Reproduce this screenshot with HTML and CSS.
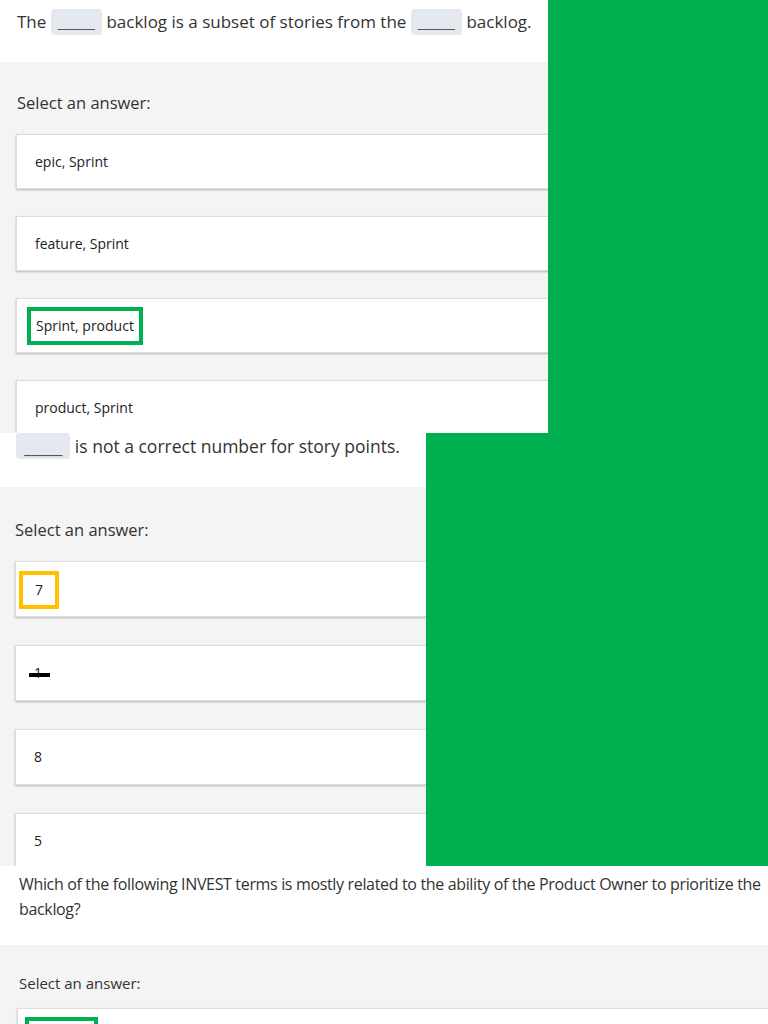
FILE: index.html
```html
<!DOCTYPE html>
<html lang="en">

<head>
    <meta charset="UTF-8">
    <meta name="viewport" content="width=device-width, initial-scale=1.0">
    <title>Story Quiz</title>

    <link rel="stylesheet" href="styles.css">
</head>

<body>

    <!-- Question 1 -->
    <section class="shot shot-one">
        <div class="quiz">
            <div class="question">
                The <span class="blank">_____</span> backlog is a subset of stories from the
                <span class="blank">_____</span> backlog.
            </div>
            <div class="answers">
                <p class="prompt">Select an answer:</p>
                <div class="card"><span class="label">epic, Sprint</span></div>
                <div class="card"><span class="label">feature, Sprint</span></div>
                <div class="card"><span class="label mark-green">Sprint, product</span></div>
                <div class="card"><span class="label">product, Sprint</span></div>
            </div>
        </div>
        <div class="fill"></div>
    </section>

    <!-- Question 2 -->
    <section class="shot shot-two">
        <div class="quiz">
            <div class="question">
                <span class="blank">_____</span> is not a correct number for story points.
            </div>
            <div class="answers">
                <p class="prompt">Select an answer:</p>
                <div class="card"><span class="label mark-yellow">7</span></div>
                <div class="card"><span class="label struck">1</span></div>
                <div class="card"><span class="label">8</span></div>
                <div class="card"><span class="label">5</span></div>
            </div>
        </div>
        <div class="fill"></div>
    </section>

    <!-- Question 3 -->
    <section class="shot shot-three">
        <div class="quiz">
            <div class="question">
                Which of the following INVEST terms is mostly related to the ability of the Product Owner to prioritize the backlog?
            </div>
            <div class="answers">
                <p class="prompt">Select an answer:</p>
                <div class="card"><span class="label mark-green">&nbsp;</span></div>
            </div>
        </div>
    </section>

</body>

</html>
```

FILE: styles.css
```css
body {
    margin: 0;
    font-family: "Open Sans", "Noto Sans", sans-serif;
    color: #333;
    background: #fff;
}

p {
    margin: 0;
}

/* each screenshot strip */
.shot {
    display: flex;
    overflow: hidden;
}

.quiz {
    overflow: hidden;
}

.fill {
    flex: 1;
    background-color: #00b050;
}

.question {
    background-color: #fff;
}

.blank {
    display: inline-block;
    background-color: #e4e9ef;
    border-radius: 4px;
    padding: 0 7px;
    line-height: 26px;
    color: #555;
}

.answers {
    background-color: #f4f4f4;
    display: flex;
    flex-direction: column;
}

.prompt {
    line-height: 24px;
}

.card {
    display: flex;
    align-items: center;
    background-color: #fff;
    border: 1px solid #dcdcdc;
    box-shadow: 0 1px 2px rgba(0, 0, 0, 0.25);
    margin-right: -20px;
    font-size: 14px;
    color: #222;
}

.label {
    line-height: 24px;
}

/* answer marks */
.mark-green {
    border: 4px solid #00b050;
    padding: 3px 5px;
}

.mark-yellow {
    border: 4px solid #ffc000;
    padding: 3px 0;
    width: 32px;
    text-align: center;
}

.struck {
    position: relative;
}

.struck::after {
    content: "";
    position: absolute;
    left: -5px;
    top: 12px;
    width: 21px;
    height: 4px;
    background-color: #000;
}

/* first strip */
.shot-one {
    height: 433px;
}

.shot-one .quiz {
    width: 548px;
}

.shot-one .question {
    height: 62px;
    box-sizing: border-box;
    padding: 8px 0 0 17px;
    font-size: 17px;
    line-height: 28px;
    white-space: nowrap;
}

.shot-one .answers {
    padding: 29px 0 0 16px;
    height: 371px;
}

.shot-one .prompt {
    font-size: 16.5px;
    margin-left: 1px;
    margin-bottom: 19px;
}

.shot-one .card {
    height: 55px;
    box-sizing: border-box;
    padding-left: 18px;
    margin-bottom: 27px;
}

.shot-one .mark-green {
    margin-left: -8px;
}

/* second strip */
.shot-two {
    height: 433px;
}

.shot-two .quiz {
    width: 426px;
}

.shot-two .question {
    height: 54px;
    box-sizing: border-box;
    padding: 0 16px;
    font-size: 17.5px;
    line-height: 27px;
}

.shot-two .blank {
    padding: 0 8px;
}

.shot-two .answers {
    padding: 31px 0 0 15px;
    height: 379px;
}

.shot-two .prompt {
    font-size: 16.5px;
    margin-bottom: 19px;
}

.shot-two .card {
    height: 57px;
    box-sizing: border-box;
    padding-left: 18px;
    margin-bottom: 28px;
}

.shot-two .mark-yellow {
    margin-left: -15px;
    margin-top: 2px;
}

/* third strip */
.shot-three {
    height: 158px;
}

.shot-three .quiz {
    width: 100%;
}

.shot-three .question {
    height: 79px;
    box-sizing: border-box;
    padding: 6px 0 0 19px;
    font-size: 16px;
    line-height: 25px;
    letter-spacing: -0.34px;
}

.shot-three .answers {
    padding: 26px 0 0 17px;
    height: 100px;
}

.shot-three .prompt {
    font-size: 15px;
    margin-left: 2px;
    margin-bottom: 13px;
}

.shot-three .card {
    height: 56px;
    box-sizing: border-box;
    align-items: flex-start;
    padding: 8px 0 0 7px;
}

.shot-three .mark-green {
    width: 55px;
}
```
